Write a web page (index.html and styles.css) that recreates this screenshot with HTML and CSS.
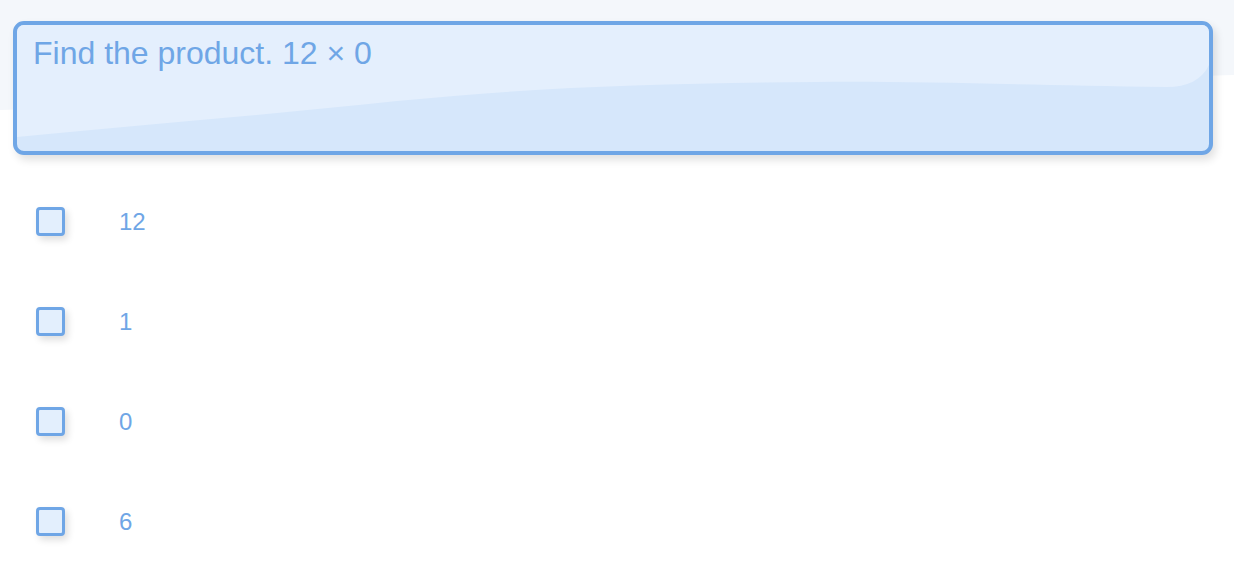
FILE: index.html
```html
<!DOCTYPE html>
<html>
<head>
<meta charset="utf-8">
<link rel="stylesheet" href="styles.css">
</head>
<body>
<div class="page">
  <div class="question">
    <svg class="gloss" viewBox="0 0 1192 126" preserveAspectRatio="none" aria-hidden="true">
      <path d="M0 0 H1192 V40 C1185 55 1170 62 1150 62 C1000 60 900 56 800 57 C650 58 520 62 380 76 C250 90 120 100 0 112 Z" fill="#e4effd"/>
    </svg>
    <p class="prompt">Find the product. 12 × 0</p>
  </div>
  <ul class="options">
    <li class="option"><span class="box"></span><span class="label">12</span></li>
    <li class="option"><span class="box"></span><span class="label">1</span></li>
    <li class="option"><span class="box"></span><span class="label">0</span></li>
    <li class="option"><span class="box"></span><span class="label">6</span></li>
  </ul>
</div>
</body>
</html>
```
FILE: styles.css
```css
html, body {
  margin: 0;
  padding: 0;
  background: #ffffff;
}
body {
  font-family: "Liberation Sans", Arial, sans-serif;
  color: #6fa6e6;
  width: 1234px;
  height: 561px;
  overflow: hidden;
  position: relative;
}
body::before {
  content: "";
  position: absolute;
  left: 0;
  top: 0;
  width: 100%;
  height: 112px;
  background: #f4f7fb;
  clip-path: polygon(0 0, 100% 0, 100% 75px, 0 110px);
  z-index: 0;
}
.page {
  position: relative;
  z-index: 1;
  padding: 21px 21px 0 13px;
}
.question {
  position: relative;
  height: 126px;
  border: 4px solid #6fa6e6;
  border-radius: 11px;
  background: #d6e7fb;
  box-shadow: 3px 5px 9px rgba(0, 0, 0, 0.12);
  overflow: hidden;
}
.gloss {
  position: absolute;
  left: 0;
  top: 0;
  width: 100%;
  height: 100%;
}
.prompt {
  position: relative;
  margin: 0;
  padding: 10px 0 0 16px;
  font-size: 32px;
  line-height: 36px;
}
.options {
  list-style: none;
  margin: 0;
  padding: 16px 0 0 23px;
}
.option {
  display: flex;
  align-items: center;
  height: 100px;
}
.box {
  width: 23px;
  height: 23px;
  border: 3px solid #6fa6e6;
  border-radius: 4px;
  background: #e3effd;
  box-shadow: 3px 4px 7px rgba(0, 0, 0, 0.13);
  flex: none;
}
.label {
  margin-left: 54px;
  font-size: 24px;
  line-height: 28px;
  position: relative;
  top: 1px;
}
```
